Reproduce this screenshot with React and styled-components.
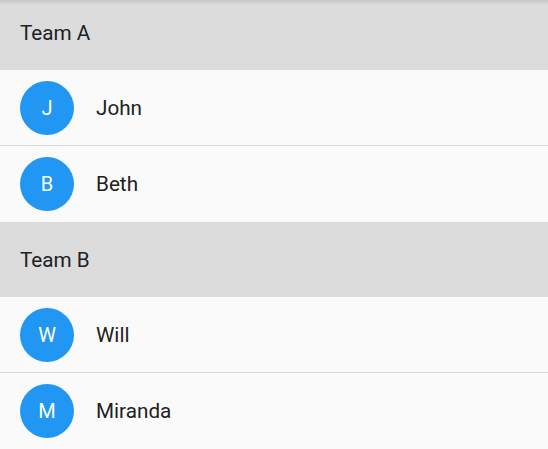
import React from "react";
import styled, { createGlobalStyle } from "styled-components";

const GlobalStyle = createGlobalStyle`
  html, body {
    margin: 0;
    padding: 0;
    background: #fafafa;
    font-family: Roboto, "Liberation Sans", sans-serif;
  }
`;

const teams = [
  { name: "Team A", members: ["John", "Beth"] },
  { name: "Team B", members: ["Will", "Miranda"] },
];

const Viewport = styled.div`
  position: relative;
  width: 548px;
  height: 449px;
  overflow: hidden;
  background: #fafafa;
`;

const TopShadow = styled.div`
  position: absolute;
  top: 0;
  left: 0;
  right: 0;
  height: 5px;
  background: linear-gradient(rgba(0, 0, 0, 0.1), rgba(0, 0, 0, 0));
  pointer-events: none;
`;

const List = styled.div`
  display: flex;
  flex-direction: column;
  margin-top: -5px;
`;

const Header = styled.div`
  display: flex;
  align-items: center;
  height: 75px;
  padding: 0 20px;
  background: #dcdcdc;
  color: #212121;
  font-size: 20.7px;
`;

const Row = styled.div`
  display: flex;
  align-items: center;
  gap: 22px;
  box-sizing: border-box;
  height: 76px;
  padding: 0 20px;
  background: #fafafa;
  border-bottom: ${({ $divider }) => ($divider ? "1px solid #dadada" : "none")};
`;

const Avatar = styled.div`
  display: flex;
  align-items: center;
  justify-content: center;
  width: 54px;
  height: 54px;
  border-radius: 50%;
  background: #2196f3;
  color: #fff;
  font-size: 20px;
  flex-shrink: 0;
`;

const Name = styled.span`
  color: #212121;
  font-size: 20.7px;
`;

export default function App() {
  return (
    <>
      <GlobalStyle />
      <Viewport>
        <List>
          {teams.map((team) => (
            <React.Fragment key={team.name}>
              <Header>{team.name}</Header>
              {team.members.map((m, i) => (
                <Row key={m} $divider={i < team.members.length - 1}>
                  <Avatar>{m[0]}</Avatar>
                  <Name>{m}</Name>
                </Row>
              ))}
            </React.Fragment>
          ))}
        </List>
        <TopShadow />
      </Viewport>
    </>
  );
}
